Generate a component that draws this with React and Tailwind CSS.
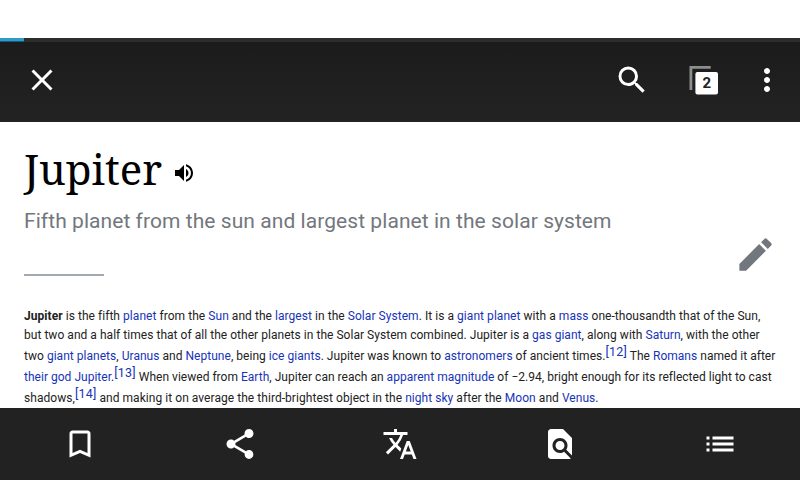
import React from 'react';

function Icon({ d, className = 'size-9' }) {
  return (
    <svg viewBox="0 0 24 24" fill="currentColor" className={`shrink-0 ${className}`}>
      <path d={d} />
    </svg>
  );
}

const paths = {
  close: 'M19 6.41L17.59 5 12 10.59 6.41 5 5 6.41 10.59 12 5 17.59 6.41 19 12 13.41 17.59 19 19 17.59 13.41 12z',
  search: 'M15.5 14h-.79l-.28-.27A6.471 6.471 0 0 0 16 9.5 6.5 6.5 0 1 0 9.5 16c1.61 0 3.09-.59 4.23-1.57l.27.28v.79l5 4.99L20.49 19l-4.99-5zm-6 0C7.01 14 5 11.99 5 9.5S7.01 5 9.5 5 14 7.01 14 9.5 11.99 14 9.5 14z',
  more: 'M12 8c1.1 0 2-.9 2-2s-.9-2-2-2-2 .9-2 2 .9 2 2 2zm0 2c-1.1 0-2 .9-2 2s.9 2 2 2 2-.9 2-2-.9-2-2-2zm0 6c-1.1 0-2 .9-2 2s.9 2 2 2 2-.9 2-2-.9-2-2-2z',
  volume: 'M3 9v6h4l5 5V4L7 9H3zm13.5 3c0-1.77-1.02-3.29-2.5-4.03v8.05c1.48-.73 2.5-2.25 2.5-4.02zM14 3.23v2.06c2.89.86 5 3.54 5 6.71s-2.11 5.85-5 6.71v2.06c4.01-.91 7-4.49 7-8.77s-2.99-7.86-7-8.77z',
  edit: 'M3 17.25V21h3.75L17.81 9.94l-3.75-3.75L3 17.25zM20.71 7.04a.996.996 0 0 0 0-1.41l-2.34-2.34a.996.996 0 0 0-1.41 0l-1.83 1.83 3.75 3.75 1.83-1.83z',
  bookmark: 'M17 3H7c-1.1 0-1.99.9-1.99 2L5 21l7-3 7 3V5c0-1.1-.9-2-2-2zm0 15l-5-2.18L7 18V5h10v13z',
  share: 'M18 16.08c-.76 0-1.44.3-1.96.77L8.91 12.7c.05-.23.09-.46.09-.7s-.04-.47-.09-.7l7.05-4.11c.54.5 1.25.81 2.04.81 1.66 0 3-1.34 3-3s-1.34-3-3-3-3 1.34-3 3c0 .24.04.47.09.7L8.04 9.81C7.5 9.31 6.79 9 6 9c-1.66 0-3 1.34-3 3s1.34 3 3 3c.79 0 1.5-.31 2.04-.81l7.12 4.16c-.05.21-.08.43-.08.65 0 1.61 1.31 2.92 2.92 2.92s2.92-1.31 2.92-2.92-1.31-2.92-2.92-2.92z',
  translate: 'M12.87 15.07l-2.54-2.51.03-.03A17.52 17.52 0 0 0 14.07 6H17V4h-7V2H8v2H1v1.99h11.17C11.5 7.92 10.44 9.75 9 11.35 8.07 10.32 7.3 9.19 6.69 8h-2c.73 1.63 1.73 3.17 2.98 4.56l-5.09 5.02L4 19l5-5 3.11 3.11.76-2.04zM18.5 10h-2L12 22h2l1.12-3h4.75L21 22h2l-4.5-12zm-2.62 7l1.62-4.33L19.12 17h-3.24z',
  find: 'M20 19.59V8l-6-6H6c-1.1 0-1.99.9-1.99 2L4 20c0 1.1.89 2 1.99 2H18c.45 0 .85-.15 1.19-.4l-4.43-4.43c-.8.52-1.74.83-2.76.83-2.76 0-5-2.24-5-5s2.24-5 5-5 5 2.24 5 5c0 1.02-.31 1.96-.83 2.75L20 19.59zM9 13c0 1.66 1.34 3 3 3s3-1.34 3-3-1.34-3-3-3-3 1.34-3 3z',
  list: 'M3 9v-2h2v2zM3 13v-2h2v2zM3 17v-2h2v2zM7 9v-2h14v2zM7 13v-2h14v2zM7 17v-2h14v2z',
};

const A = ({ children }) => <a className="text-[#1733b8]">{children}</a>;
const Ref = ({ children }) => (
  <a className="relative -top-[4px] text-[12.5px] tracking-[0.2px] text-[#1733b8]">{children}</a>
);

function Line({ className, children }) {
  return <div className={`w-max whitespace-nowrap ${className}`}>{children}</div>;
}

export default function App() {
  return (
    <div className="flex h-[480px] w-[800px] flex-col overflow-hidden bg-white font-['Roboto',sans-serif]">
      <div className="h-[38px] shrink-0" />
      <header className="flex h-21 shrink-0 flex-col bg-linear-to-b from-[#1b1b1b] to-[#232323] text-white">
        <div className="h-1 shrink-0 bg-[#2d2d2d]">
          <div className="h-1 w-6 bg-linear-to-b from-[#2a9bcb] from-75% to-[#1f5a73] to-75%" />
        </div>
        <div className="flex h-[76px] items-center pl-6 pr-[15px]">
          <Icon d={paths.close} />
          <Icon d={paths.search} className="ml-auto size-9" />
          <svg viewBox="0 0 30 30" className="ml-[39px] mr-[30px] h-[30px] w-[30px] shrink-0">
            <path d="M1.9 25V2.4H21.7" fill="none" stroke="#8d8d8d" strokeWidth="2.8" />
            <rect x="6.4" y="7" width="22.6" height="22.6" rx="2" fill="#fff" />
            <text x="17.7" y="23.3" textAnchor="middle" fontSize="15" fontWeight="700" fill="#222">2</text>
          </svg>
          <Icon d={paths.more} />
        </div>
      </header>

      <main className="flex h-[286px] shrink-0 flex-col overflow-hidden px-6">
        <div className="flex h-[77px] shrink-0 items-start pt-[19px]">
          <h1 className="w-[148px] whitespace-nowrap font-['Noto_Serif','Droid_Serif','DejaVu_Serif_Condensed','DejaVu_Serif',serif] text-[42px] leading-[56px] text-black">
            Jupiter
          </h1>
          <Icon d={paths.volume} className="mt-5 size-6 text-black" />
        </div>
        <p className="h-11 shrink-0 whitespace-nowrap pt-2 text-[21px] leading-7 tracking-[0.063px] text-[#72777d]">
          Fifth planet from the sun and largest planet in the solar system
        </p>
        <div className="flex h-[62px] shrink-0 justify-between">
          <div className="mt-[31px] h-[2px] w-20 bg-[#a2a9b1]" />
          <Icon d={paths.edit} className="-mr-px -mt-[10px] size-[43px] text-[#72777d]" />
        </div>
        <article className="flex flex-col pt-px text-[12px] leading-5 text-[#222]">
          <Line className="h-[19px] tracking-[0.05px]">
            <b>Jupiter</b> is the fifth <A>planet</A> from the <A>Sun</A> and the <A>largest</A> in the <A>Solar System</A>. It is a <A>giant planet</A> with a <A>mass</A> one-thousandth that of the Sun,
          </Line>
          <Line className="h-[21px] tracking-[0.037px]">
            but two and a half times that of all the other planets in the Solar System combined. Jupiter is a <A>gas giant</A>, along with <A>Saturn</A>, with the other
          </Line>
          <Line className="h-[21px] tracking-[0.03px]">
            two <A>giant planets</A>, <A>Uranus</A> and <A>Neptune</A>, being <A>ice giants</A>. Jupiter was known to <A>astronomers</A> of ancient times.<Ref>[12]</Ref> The <A>Romans</A> named it after
          </Line>
          <Line className="h-[21px] tracking-[0.02px]">
            <A>their god Jupiter</A>.<Ref>[13]</Ref> When viewed from <A>Earth</A>, Jupiter can reach an <A>apparent magnitude</A> of −2.94, bright enough for its reflected light to cast
          </Line>
          <Line className="h-5 tracking-[0.05px]">
            shadows,<Ref>[14]</Ref> and making it on average the third-brightest object in the <A>night sky</A> after the <A>Moon</A> and <A>Venus</A>.
          </Line>
        </article>
      </main>

      <nav className="grid h-18 shrink-0 grid-cols-5 place-items-center bg-[#222] text-white">
        <Icon d={paths.bookmark} />
        <Icon d={paths.share} />
        <Icon d={paths.translate} />
        <Icon d={paths.find} />
        <Icon d={paths.list} />
      </nav>
    </div>
  );
}
